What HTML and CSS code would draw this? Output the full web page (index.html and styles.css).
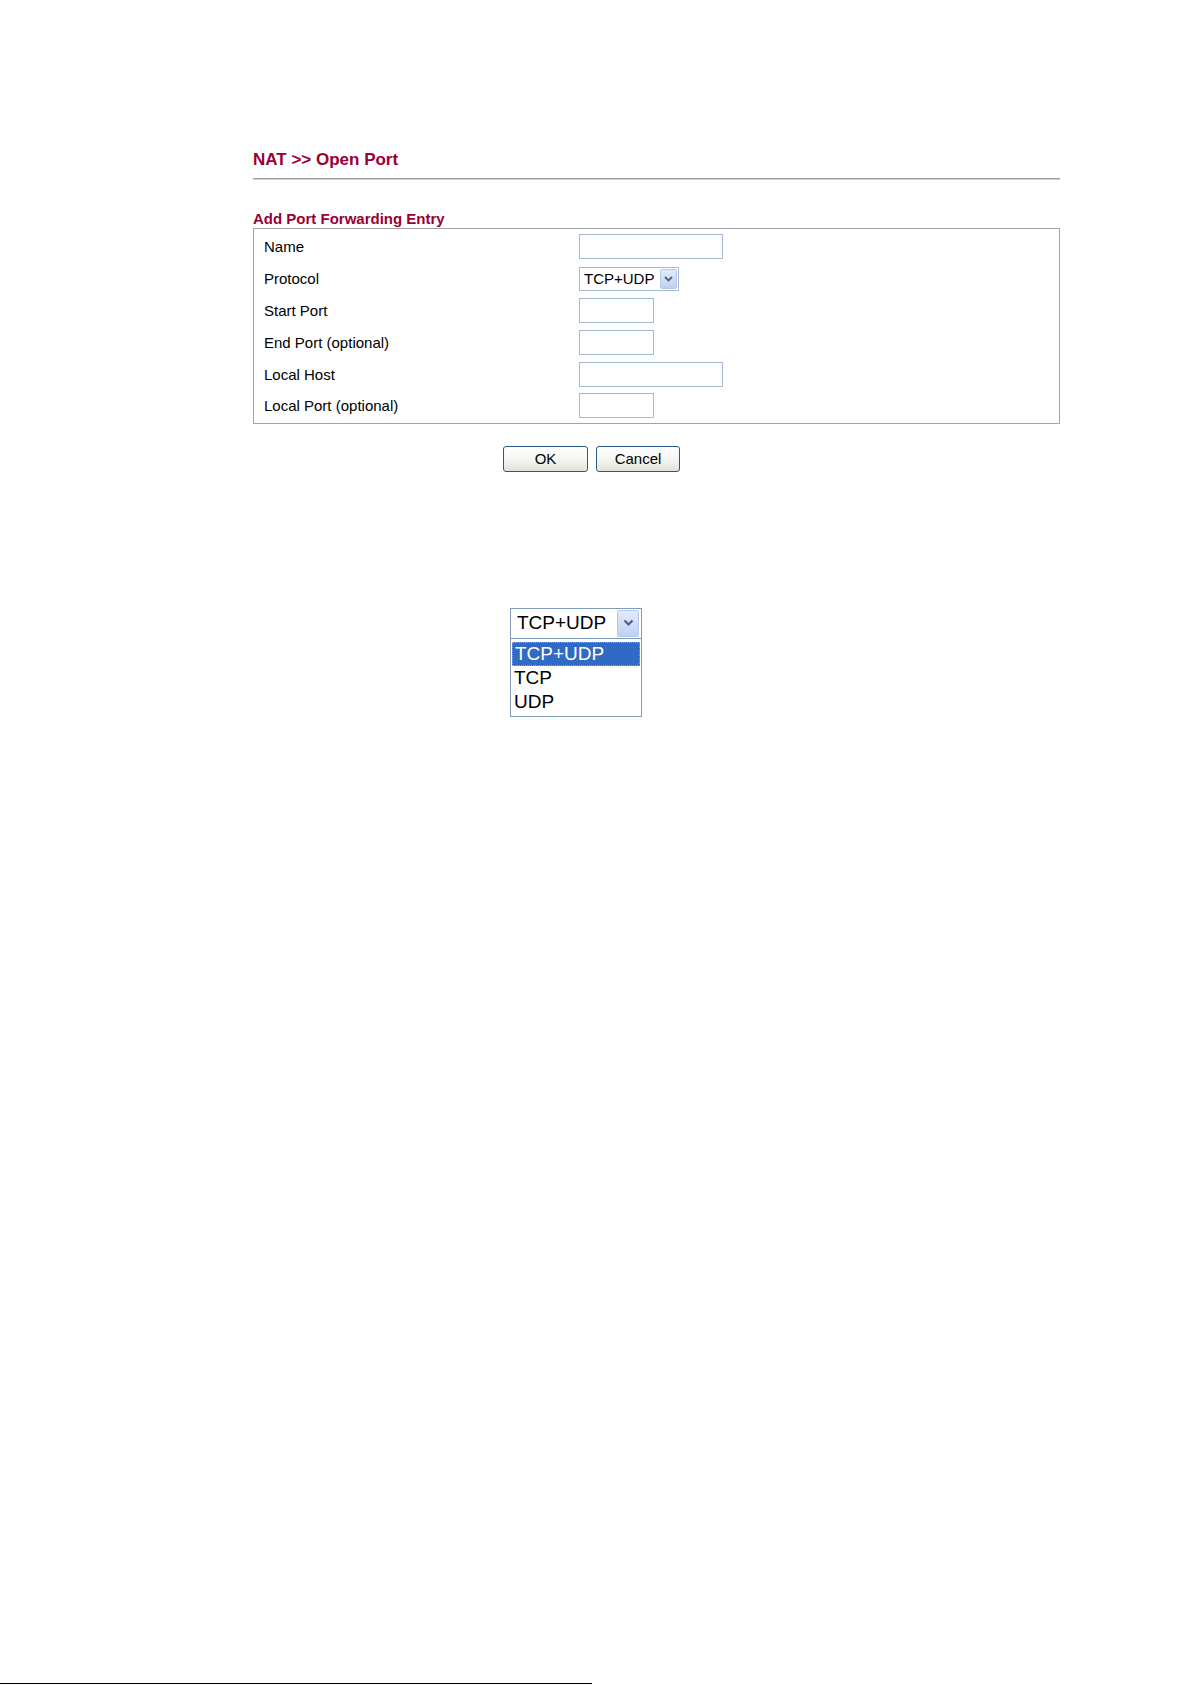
FILE: index.html
```html
<!DOCTYPE html>
<html>
<head>
<meta charset="utf-8">
<link rel="stylesheet" href="styles.css">
</head>
<body>
<div class="page">
  <div class="content">
    <div class="title">NAT &gt;&gt; Open Port</div>
    <div class="rule"></div>
    <div class="section-title">Add Port Forwarding Entry</div>
    <div class="box">
      <div class="row"><div class="label">Name</div><div class="field"><span class="input wide"></span></div></div>
      <div class="row"><div class="label">Protocol</div><div class="field">
        <span class="select">
          <span class="select-text">TCP+UDP</span>
          <span class="arrow"><svg width="9" height="6" viewBox="0 0 9 6"><path d="M1 1 L4.5 4.5 L8 1" fill="none" stroke="#4d6185" stroke-width="1.8"/></svg></span>
        </span>
      </div></div>
      <div class="row"><div class="label">Start Port</div><div class="field"><span class="input narrow"></span></div></div>
      <div class="row"><div class="label">End Port (optional)</div><div class="field"><span class="input narrow"></span></div></div>
      <div class="row"><div class="label">Local Host</div><div class="field"><span class="input wide"></span></div></div>
      <div class="row"><div class="label">Local Port (optional)</div><div class="field"><span class="input narrow"></span></div></div>
    </div>
    <div class="buttons">
      <span class="btn ok">OK</span>
      <span class="btn cancel">Cancel</span>
    </div>
  </div>

  <div class="dropdown">
    <div class="dd-select">
      <span class="dd-text">TCP+UDP</span>
      <span class="dd-arrow"><svg width="11" height="8" viewBox="0 0 11 8"><path d="M1.5 1.5 L5.5 5.5 L9.5 1.5" fill="none" stroke="#4d6185" stroke-width="2.2"/></svg></span>
    </div>
    <div class="dd-list">
      <div class="dd-opt selected">TCP+UDP</div>
      <div class="dd-opt">TCP</div>
      <div class="dd-opt">UDP</div>
    </div>
  </div>

  <div class="footnote-rule"></div>
</div>
</body>
</html>
```
FILE: styles.css
```css
html, body {
  margin: 0;
  padding: 0;
  background: #ffffff;
}
body {
  font-family: "Liberation Sans", Arial, sans-serif;
  color: #000;
}
.page {
  min-height: 1685px;
  display: flex;
  flex-direction: column;
}
.content {
  margin-left: 253px;
  width: 807px;
  padding-top: 150px;
}
.title {
  font-size: 17px;
  font-weight: bold;
  line-height: 20px;
  height: 20px;
  color: #990033;
}
.rule {
  margin-top: 8px;
  height: 0;
  border-top: 1px solid #9a9a9a;
  border-bottom: 1px solid #d4d4d4;
}
.section-title {
  margin-top: 30px;
  font-size: 15px;
  font-weight: bold;
  line-height: 18px;
  height: 18px;
  color: #990033;
}
.box {
  border: 1px solid #a3a3a3;
  padding: 2px 0 1px 10px;
}
.row {
  display: flex;
  align-items: center;
  height: 31.8px;
}
.label {
  width: 315px;
  font-size: 15px;
  color: #000;
}
.field {
  display: flex;
  align-items: center;
}
.input {
  display: block;
  height: 23px;
  border: 1px solid #a5b9d1;
  background: #fff;
}
.input.wide { width: 142px; }
.input.narrow { width: 73px; }
.select {
  display: flex;
  align-items: center;
  width: 98px;
  height: 22px;
  border: 1px solid #a5b9d1;
  background: #fff;
  position: relative;
}
.select-text {
  font-size: 15px;
  padding-left: 4px;
  flex: 1;
}
.arrow {
  width: 15px;
  height: 18px;
  margin-right: 1px;
  border: 1px solid #b7c9ea;
  border-radius: 2px;
  background: linear-gradient(#e3ebfa, #bed0f2);
  display: flex;
  align-items: center;
  justify-content: center;
}
.buttons {
  display: flex;
  gap: 8px;
  margin-top: 22px;
  margin-left: 250px;
}
.btn {
  display: flex;
  align-items: center;
  justify-content: center;
  height: 24px;
  border: 1px solid #2a5a85;
  border-radius: 3px;
  background: linear-gradient(#ffffff, #f3f3ee 60%, #e2e2da);
  font-size: 15px;
  color: #000;
}
.btn.ok { width: 83px; }
.btn.cancel { width: 82px; }

.dropdown {
  margin-top: 136px;
  margin-left: 510px;
  width: 132px;
}
.dd-select {
  display: flex;
  align-items: center;
  height: 29px;
  border: 1px solid #7f9db9;
  border-bottom: none;
  background: #fff;
}
.dd-text {
  flex: 1;
  font-size: 19px;
  padding-left: 6px;
}
.dd-arrow {
  width: 20px;
  height: 25px;
  margin-right: 2px;
  border: 1px solid #b7c9ea;
  border-radius: 2px;
  background: linear-gradient(#e3ebfa, #bed0f2);
  display: flex;
  align-items: center;
  justify-content: center;
}
.dd-list {
  border: 1px solid #7f9db9;
  padding: 3px 1px 2px 1px;
  background: #fff;
}
.dd-opt {
  height: 24px;
  line-height: 24px;
  font-size: 19px;
  padding-left: 2px;
  color: #000;
}
.dd-opt.selected {
  height: 22px;
  line-height: 22px;
  background: #316ac5;
  color: #fff;
  border: 1px dotted #c9a04a;
}
.footnote-rule {
  margin-top: auto;
  margin-bottom: 1px;
  width: 592px;
  height: 1px;
  background: #000;
}
```
